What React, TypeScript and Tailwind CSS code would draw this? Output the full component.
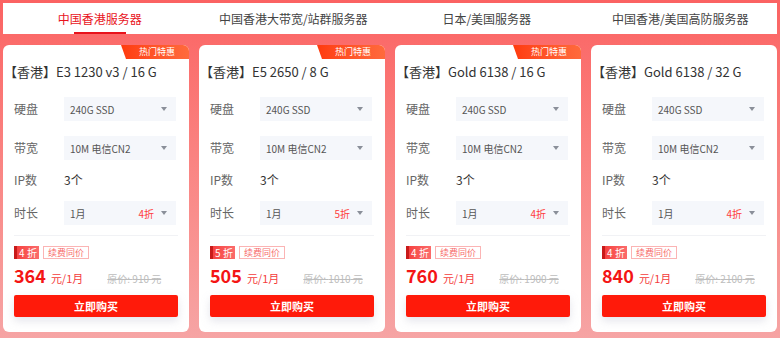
const font = { fontFamily: '"Noto Sans CJK SC", "Noto Sans", sans-serif' };

type Plan = {
  title: string;
  disk: string;
  bw: string;
  ip: string;
  discount: string;
  price: string;
  origin: string;
  hot: boolean;
};

const plans: Plan[] = [
  { title: "【香港】E3 1230 v3 / 16 G", disk: "240G SSD", bw: "10M 电信CN2", ip: "3个", discount: "4", price: "364", origin: "910", hot: true },
  { title: "【香港】E5 2650 / 8 G", disk: "240G SSD", bw: "10M 电信CN2", ip: "3个", discount: "5", price: "505", origin: "1010", hot: true },
  { title: "【香港】Gold 6138 / 16 G", disk: "240G SSD", bw: "10M 电信CN2", ip: "3个", discount: "4", price: "760", origin: "1900", hot: true },
  { title: "【香港】Gold 6138 / 32 G", disk: "240G SSD", bw: "10M 电信CN2", ip: "3个", discount: "4", price: "840", origin: "2100", hot: false },
];

const tabs = ["中国香港服务器", "中国香港大带宽/站群服务器", "日本/美国服务器", "中国香港/美国高防服务器"];

function Caret() {
  return <span className="ml-[7px] inline-block w-0 h-0 border-l-[3.5px] border-r-[3.5px] border-t-[4px] border-l-transparent border-r-transparent border-t-[#8a8f99]" />;
}

function SelectBox({ value, extra }: { value: string; extra?: string }) {
  return (
    <div className="w-[112px] h-[24px] bg-[#f5f7fb] flex items-center pl-[6px] pr-[9px] text-[10px] text-[#555]">
      <span className="flex-1">{value}</span>
      {extra && <span className="text-[10px] text-[#ff3b3b]">{extra}</span>}
      <Caret />
    </div>
  );
}

function Row({ label, children }: { label: string; children: React.ReactNode }) {
  return (
    <div className="flex items-center h-[24px]">
      <span className="w-[50px] text-[12px] text-[#666]">{label}</span>
      {children}
    </div>
  );
}

function Card({ p }: { p: Plan }) {
  return (
    <div className="relative w-[186px] h-[287px] bg-white rounded-[6px] overflow-hidden">
      {p.hot && (
        <div
          className="absolute right-0 top-0 w-[68px] h-[14px] bg-gradient-to-r from-[#ff3a0c] to-[#ff6a3c] text-white text-[9px] leading-[14px] text-center pl-[4px]"
          style={{ clipPath: "polygon(0 0, 100% 0, 100% 100%, 5px 100%)" }}
        >
          热门特惠
        </div>
      )}
      <div className="pt-[17px] pl-[1px] text-[13px] leading-[20px] text-[#333]">{p.title}</div>
      <div className="px-[11px]">
        <div className="mt-[15px]">
          <Row label="硬盘"><SelectBox value={p.disk} /></Row>
        </div>
        <div className="mt-[15px]">
          <Row label="带宽"><SelectBox value={p.bw} /></Row>
        </div>
        <div className="mt-[8px]">
          <Row label="IP数"><span className="text-[12px] text-[#333]">{p.ip}</span></Row>
        </div>
        <div className="mt-[9px]">
          <Row label="时长"><SelectBox value="1月" extra={`${p.discount}折`} /></Row>
        </div>
        <div className="mt-[10px] border-t border-[#f1f2f5]" />
        <div className="mt-[10px] flex items-center gap-[4px]">
          <span className="h-[13px] w-[25px] flex items-center bg-gradient-to-r from-[#f53a3a] to-[#fb6b6b]">
            <span className="w-[3px] h-full bg-[#c81a1a]" />
            <span className="flex-1 text-center text-[10px] leading-[13px] text-white whitespace-nowrap">{p.discount} 折</span>
          </span>
          <span className="h-[13px] px-[4px] border border-[#fbb4b4] text-[9px] leading-[11px] text-[#f76b6b]">续费同价</span>
        </div>
        <div className="mt-[4px] flex items-baseline h-[24px]">
          <span className="text-[18px] font-semibold text-[#f41515] leading-[24px]">{p.price}</span>
          <span className="ml-[5px] text-[11px] text-[#f43c3c]">元/1月</span>
          <span className="ml-[24px] text-[10px] text-[#bdbdbd] line-through">原价: {p.origin} 元</span>
        </div>
        <button className="mt-[8px] w-full h-[22px] rounded-[2px] bg-[#ff1a0a] text-white text-[11px] font-bold leading-[22px] shadow-[0_4px_8px_rgba(180,180,200,0.35)]">
          立即购买
        </button>
      </div>
    </div>
  );
}

export default function App() {
  return (
    <div className="w-[780px] h-[338px] overflow-hidden bg-gradient-to-b from-[#fb6262] to-[#f6a4a4]" style={font}>
      <div className="mx-[3px] pt-[3px]">
        <div className="h-[31px] bg-white flex">
          {tabs.map((t, i) => (
            <div key={t} className="flex-1 relative flex items-center justify-center">
              <span className={i === 0 ? "text-[12px] text-[#e8141c]" : "text-[12px] text-[#444]"}>{t}</span>
              {i === 0 && <span className="absolute bottom-0 left-1/2 -translate-x-1/2 w-[52px] h-[2px] bg-[#e8141c]" />}
            </div>
          ))}
        </div>
        <div className="mt-[11px] flex gap-[10px]">
          {plans.map((p) => (
            <Card key={p.title} p={p} />
          ))}
        </div>
      </div>
    </div>
  );
}
